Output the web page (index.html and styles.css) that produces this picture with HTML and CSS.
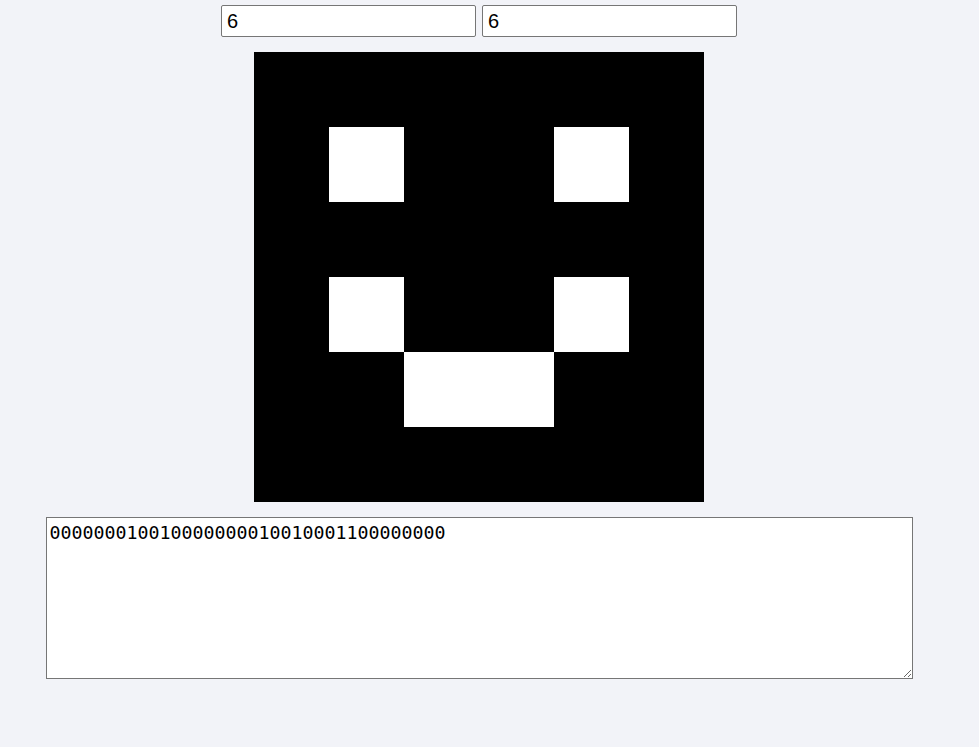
FILE: index.html
```html
<!DOCTYPE html>
<html>
<head>
<meta charset="utf-8">
<link rel="stylesheet" href="styles.css">
</head>
<body>
<div class="app">
  <div class="controls">
    <input class="size-input" type="text" value="6">
    <input class="size-input" type="text" value="6">
  </div>
  <div class="board">
    <div class="cell"></div><div class="cell"></div><div class="cell"></div><div class="cell"></div><div class="cell"></div><div class="cell"></div>
    <div class="cell"></div><div class="cell on"></div><div class="cell"></div><div class="cell"></div><div class="cell on"></div><div class="cell"></div>
    <div class="cell"></div><div class="cell"></div><div class="cell"></div><div class="cell"></div><div class="cell"></div><div class="cell"></div>
    <div class="cell"></div><div class="cell on"></div><div class="cell"></div><div class="cell"></div><div class="cell on"></div><div class="cell"></div>
    <div class="cell"></div><div class="cell"></div><div class="cell on"></div><div class="cell on"></div><div class="cell"></div><div class="cell"></div>
    <div class="cell"></div><div class="cell"></div><div class="cell"></div><div class="cell"></div><div class="cell"></div><div class="cell"></div>
  </div>
  <textarea class="output">000000010010000000010010001100000000</textarea>
</div>
</body>
</html>
```
FILE: styles.css
```css
html, body {
  margin: 0;
  padding: 0;
  background: #f2f3f8;
}
.app {
  width: 958px;
  padding-top: 5px;
  display: flex;
  flex-direction: column;
  align-items: center;
  gap: 15px;
}
.controls {
  display: flex;
  gap: 6px;
}
.size-input {
  box-sizing: border-box;
  width: 255px;
  height: 32px;
  margin: 0;
  padding: 1px 5px;
  border: 1px solid #767676;
  border-radius: 2px;
  background: #fff;
  font-family: "Liberation Sans", Arial, sans-serif;
  font-size: 20px;
  color: #000;
}
.board {
  display: grid;
  grid-template-columns: repeat(6, 75px);
  grid-template-rows: repeat(6, 75px);
  width: 450px;
  height: 450px;
  background: #000;
}
.cell {
  background: #000;
}
.cell.on {
  background: #fff;
}
.output {
  box-sizing: border-box;
  width: 867px;
  height: 162px;
  margin: 0;
  padding: 4px 3px 2px;
  border: 1px solid #767676;
  border-radius: 0;
  background: #fff;
  font-family: "DejaVu Sans Mono", monospace;
  font-size: 18.27px;
  color: #000;
  resize: both;
}
```
